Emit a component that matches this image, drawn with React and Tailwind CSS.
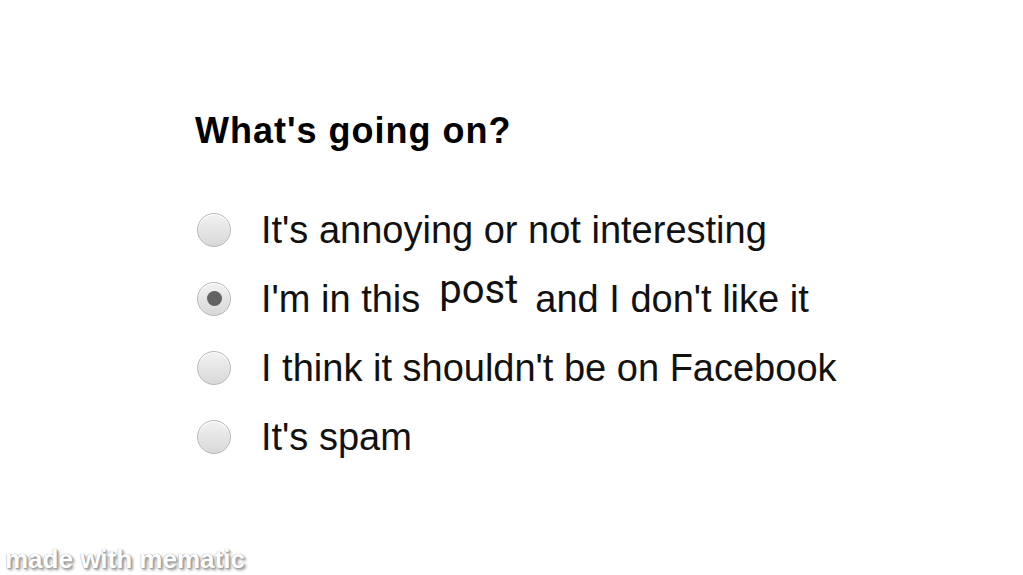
export default function App() {
  const options = [
    { id: 'annoying', label: "It's annoying or not interesting" },
    { id: 'me', label: null },
    { id: 'facebook', label: "I think it shouldn't be on Facebook" },
    { id: 'spam', label: "It's spam" },
  ]
  const selected = 'me'

  return (
    <div className="relative w-[1023px] h-[575px] bg-white overflow-hidden font-['Liberation_Sans',Arial,sans-serif] text-[#111]">
      <div className="pl-[195px] pt-[113px]">
        <h1 className="text-[36px] leading-none font-bold tracking-[1px] text-black">What's going on?</h1>

        <ul className="mt-[46px] pl-[2px] flex flex-col">
          {options.map(o => (
            <li key={o.id} className="h-[69px] flex items-center gap-[30px]">
              <span className="w-[34px] h-[34px] shrink-0 rounded-full border border-[#b8b8b8] bg-gradient-to-b from-[#f2f2f2] to-[#d8d8d8] flex items-center justify-center shadow-[inset_0_1px_1px_#fff]">
                {o.id === selected && <span className="w-[15px] h-[15px] rounded-full bg-[#636363]" />}
              </span>
              <span className="text-[38px] leading-none whitespace-nowrap">
                {o.label ?? (
                  <>
                    I'm in this
                    <span className="inline-block leading-none ml-[19px] mr-[17px] font-['Roboto',sans-serif] text-[40px] -translate-y-[9px]">post</span>
                    and I don't like it
                  </>
                )}
              </span>
            </li>
          ))}
        </ul>
      </div>

      {/* mematic watermark */}
      <div className="absolute left-[5px] bottom-[3px] text-[26px] leading-none font-bold text-white [text-shadow:0_0_1px_#888,1px_1px_0_#aaa,2px_2px_3px_#888]">
        made with mematic
      </div>
    </div>
  )
}
